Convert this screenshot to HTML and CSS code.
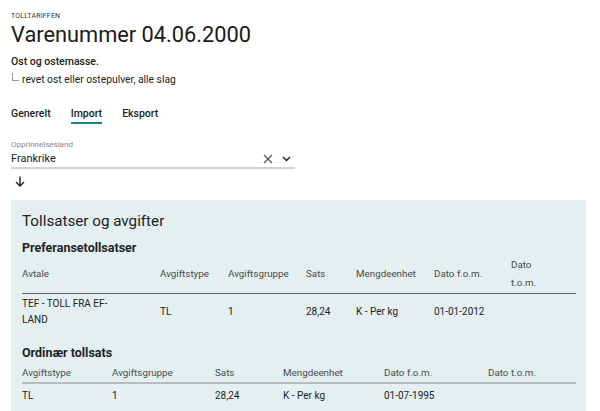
FILE: index.html
```html
<!DOCTYPE html>
<html lang="no">
<head>
<meta charset="utf-8">
<title>Varenummer 04.06.2000</title>
<link rel="stylesheet" href="styles.css">
</head>
<body>
<main class="page">
  <header class="head">
    <div class="eyebrow">TOLLTARIFFEN</div>
    <h1 class="title">Varenummer 04.06.2000</h1>
    <p class="desc">Ost og ostemasse.</p>
    <p class="sub"><span class="tree"></span>revet ost eller ostepulver, alle slag</p>
  </header>

  <nav class="tabs">
    <span class="tab">Generelt</span>
    <span class="tab active">Import</span>
    <span class="tab">Eksport</span>
  </nav>

  <div class="field">
    <label class="field-label">Opprinnelsesland</label>
    <div class="select">
      <span class="select-value">Frankrike</span>
      <svg class="icon-x" width="10" height="10" viewBox="0 0 10 10"><path d="M1 1L9 9M9 1L1 9" stroke="#555" stroke-width="1.2" fill="none"/></svg>
      <svg class="icon-chev" width="9" height="6" viewBox="0 0 9 6"><path d="M1 1L4.5 4.5L8 1" stroke="#222" stroke-width="1.5" fill="none"/></svg>
    </div>
  </div>
  <svg class="arrow" width="10" height="11" viewBox="0 0 10 11"><path d="M5 0.5V10M1 6L5 10L9 6" stroke="#222" stroke-width="1.4" fill="none"/></svg>

  <section class="panel">
    <h2 class="panel-title">Tollsatser og avgifter</h2>
    <h3 class="sec-title">Preferansetollsatser</h3>
    <table class="rates pref">
      <colgroup>
        <col style="width:138px"><col style="width:68px"><col style="width:78px"><col style="width:50px"><col style="width:78px"><col style="width:77px"><col style="width:65px">
      </colgroup>
      <thead>
        <tr><th>Avtale</th><th>Avgiftstype</th><th>Avgiftsgruppe</th><th>Sats</th><th>Mengdeenhet</th><th>Dato f.o.m.</th><th class="narrow">Dato t.o.m.</th></tr>
      </thead>
      <tbody>
        <tr><td class="avtale">TEF - TOLL FRA EF-LAND</td><td>TL</td><td>1</td><td>28,24</td><td>K - Per kg</td><td>01-01-2012</td><td></td></tr>
      </tbody>
    </table>

    <h3 class="sec-title sec2">Ordinær tollsats</h3>
    <table class="rates ord">
      <colgroup>
        <col style="width:90px"><col style="width:103px"><col style="width:68px"><col style="width:101px"><col style="width:104px"><col style="width:88px">
      </colgroup>
      <thead>
        <tr><th>Avgiftstype</th><th>Avgiftsgruppe</th><th>Sats</th><th>Mengdeenhet</th><th>Dato f.o.m.</th><th>Dato t.o.m.</th></tr>
      </thead>
      <tbody>
        <tr><td>TL</td><td>1</td><td>28,24</td><td>K - Per kg</td><td>01-07-1995</td><td></td></tr>
      </tbody>
    </table>
  </section>
</main>
</body>
</html>
```

FILE: styles.css
```css
* { box-sizing: border-box; }
html, body { margin: 0; padding: 0; background: #fff; }
body {
  font-family: Roboto, "Noto Sans", "Liberation Sans", sans-serif;
  color: #222;
  overflow: hidden;
}
.page { padding: 11px 14px 0 11px; }
.eyebrow { font-size: 7px; letter-spacing: 0.2px; color: #333; line-height: 10px; }
.title { margin: 1px 0 0; font-size: 21.8px; font-weight: 400; line-height: 26px; color: #1a1a1a; }
.desc { margin: 7px 0 0; font-size: 10.5px; font-weight: 500; line-height: 14px; }
.sub { margin: 4px 0 0; font-size: 10.3px; line-height: 14px; display: flex; align-items: flex-start; }
.tree { width: 7px; height: 8px; border-left: 1px solid #999; border-bottom: 1px solid #999; margin: 0 3px 0 1px; flex: none; }
.tabs { display: flex; gap: 20px; margin-top: 20px; height: 17px; }
.tab { font-size: 10.5px; font-weight: 500; line-height: 14px; height: 17px; padding-bottom: 1px; color: #222; }
.tab.active { border-bottom: 2px solid #1d7f85; }
.field { width: 284px; margin-top: 16px; }
.field-label { display: block; font-size: 8px; color: #888; line-height: 10px; }
.select { display: flex; align-items: center; height: 19px; border-bottom: 2px solid #d3d3d3; }
.select-value { flex: 1; font-size: 11px; line-height: 14px; }
.icon-x { margin-right: 9px; }
.icon-chev { margin-right: 4px; }
.arrow { display: block; margin: 7px 0 0 4px; }
.panel {
  margin-top: 13px;
  background: #e4eff1;
  padding: 11px 10px 14px 11px;
  width: 575px;
}
.panel-title { margin: 0; font-size: 15.2px; font-weight: 400; line-height: 20px; color: #222; }
.sec-title { margin: 9px 0 0; font-size: 12.5px; font-weight: 700; line-height: 16px; color: #222; }
.sec2 { margin-top: 14px; }
.rates { border-collapse: collapse; table-layout: fixed; width: 554px; }
.rates th { font-size: 9.8px; font-weight: 400; color: #4a4a4a; text-align: left; padding: 0 10px 0 0; line-height: 18px; vertical-align: middle; }
.rates td { font-size: 10px; color: #222; text-align: left; padding: 0 10px 0 0; line-height: 16px; vertical-align: middle; }
.pref thead tr { height: 37px; border-bottom: 1px solid #666; }
.pref tbody tr { height: 38px; }
.pref td.avtale { padding-right: 30px; }
.ord thead tr { height: 22px; border-bottom: 2px solid #bbb; }
.ord th { vertical-align: bottom; line-height: 14px; padding-bottom: 2px; }
.ord tbody tr { height: 24px; }
.rates th.narrow { padding-right: 18px; }
```
